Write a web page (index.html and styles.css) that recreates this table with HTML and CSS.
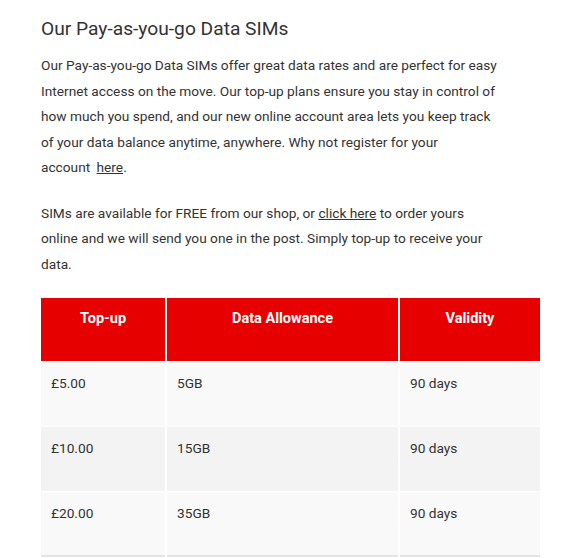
FILE: index.html
```html
<!DOCTYPE html>
<html lang="en">
<head>
  <meta charset="UTF-8">
  <title>Data SIMs</title>
  <link rel="stylesheet" href="styles.css">
</head>
<body>

  <!-- Data SIMs intro -->
  <div class="content">
    <h2>Our Pay-as-you-go Data SIMs</h2>
    <p>Our Pay-as-you-go Data SIMs offer great data rates and are perfect for easy Internet access on the move. Our top-up plans ensure you stay in control of how much you spend, and our new online account area lets you keep track of your data balance anytime, anywhere. Why not register for your account&nbsp;<a href="#" class="gap">here</a>.</p>
    <p>SIMs are available for FREE from our shop, or <a href="#">click here</a> to order yours online and we will send you one in the post. Simply top-up to receive your data.</p>

    <!-- Price table -->
    <table class="prices">
      <thead>
        <tr>
          <th class="col-topup">Top-up</th>
          <th class="col-data">Data Allowance</th>
          <th class="col-valid">Validity</th>
        </tr>
      </thead>
      <tbody>
        <tr><td>£5.00</td><td>5GB</td><td>90 days</td></tr>
        <tr><td>£10.00</td><td>15GB</td><td>90 days</td></tr>
        <tr><td>£20.00</td><td>35GB</td><td>90 days</td></tr>
      </tbody>
    </table>
  </div>

</body>
</html>
```

FILE: styles.css
```css
body {
  margin: 0;
  padding: 14px 41px 0;
  background: #fff;
  color: #333;
  font-family: 'Roboto', 'Liberation Sans', sans-serif;
}

h2 {
  font-size: 19.2px;
  font-weight: 400;
  line-height: 30px;
  margin: 0 0 9px;
}

p {
  max-width: 461px;
  font-size: 13.7px;
  line-height: 25.5px;
  margin: 0 0 20px;
}

a {
  color: #333;
  text-decoration: underline;
}

a.gap {
  margin-left: 3px;
}

/* Table */
.prices {
  width: 100%;
  border-collapse: collapse;
  font-size: 13.7px;
  margin-top: 21px;
  border-bottom: 2px solid #e4e4e4;
}

.prices th {
  background: #e60000;
  color: #fff;
  font-size: 14.5px;
  font-weight: 700;
  text-align: center;
  vertical-align: top;
  height: 63px;
  padding: 8px 10px 0;
  line-height: 25px;
  box-sizing: border-box;
  border-left: 2px solid #fff;
}

.prices th:first-child,
.prices td:first-child {
  border-left: none;
}

.col-topup { width: 125px; }
.col-data { width: 233px; }

.prices td {
  vertical-align: top;
  height: 65px;
  padding: 9px 10px 0;
  line-height: 25px;
  box-sizing: border-box;
  border-left: 2px solid #fff;
  border-top: 1px solid #fff;
}

.prices tbody tr:nth-child(odd) td {
  background: #f9f9f9;
}

.prices tbody tr:nth-child(even) td {
  background: #f3f3f3;
}
```
